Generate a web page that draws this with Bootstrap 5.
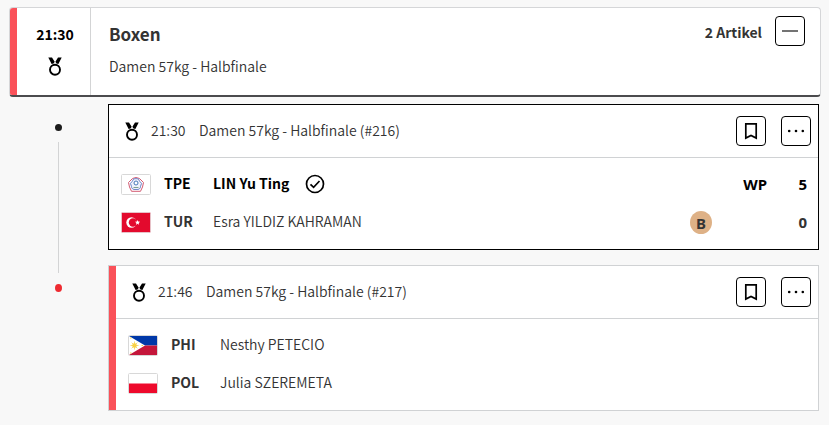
<!DOCTYPE html>
<html lang="de">
<head>
<meta charset="utf-8">
<meta name="viewport" content="width=device-width, initial-scale=1">
<title>Boxen</title>
<link href="https://cdn.jsdelivr.net/npm/bootstrap@5.3.0/dist/css/bootstrap.min.css" rel="stylesheet">
<style>
body{background:#f8f8f8;color:#333;font:350 14px/20px "Noto Sans CJK SC","Noto Sans",sans-serif;padding:7px 8px 15px 9px}
.accent{width:7px;background:#fa5159;flex:none}
.session{background:#fff;border:1px solid #d5d6d8;border-bottom:2px solid #4b4b4d;border-radius:4px;overflow:hidden;height:90px}
.session-time{width:74px;border-right:1px solid #d3d4d5;color:#000;padding:16px 0 0 3px;gap:13px}
.session-title{font-size:17px;line-height:24px;font-weight:700;margin:0 0 10px}
.session-text{padding:14px 0 0 18px}
.session-tools{padding:8px 15px 0 0;gap:13px}
.session-count{padding-top:6px}
.square{width:30px;height:30px;padding:0;border:1px solid #000;border-radius:4px;background:#fff;color:#000;display:flex;align-items:center;justify-content:center}
.timeline{width:99px;padding-top:19px}
.dot{width:7px;height:7px;border-radius:50%;background:#1c1c1c}
.dot-live{height:8px;background:#ee2b31}
.stem{width:1px;height:131px;background:#d3d4d5;margin:11px 0}
.bouts{gap:15px;padding:7px 2px 0 0}
.bout{background:#fff;border:1px solid #d0d2d4}
.bout-done{border-color:#000}
.bout-head{height:53px;border-bottom:1px solid #d0d2d4;padding:0 7px 0 16px;gap:15px}
.bout-time{width:33px;margin-left:-3px}
.bout-head time,.bout-head span,.side span{padding-bottom:3px}
.bout-body{padding:7px 11px 8px 12px}
.side{height:38px}
.side .side-code{width:49px;margin-left:13px;font-weight:700;padding-bottom:2px}
.winner{color:#000;font-weight:700}
.side .score{font-family:"Noto Sans",sans-serif;font-weight:700;font-size:15px;width:40px;padding:0}
.side .bronze{width:22px;height:23px;border-radius:50%;background:#deb186;font:700 15px/24px "Noto Sans",sans-serif;margin-right:55px;padding:0}
svg{display:block;flex:none}
</style>
<script src="https://cdn.jsdelivr.net/npm/bootstrap@5.3.0/dist/js/bootstrap.bundle.min.js"></script>
</head>
<body>
<svg width="0" height="0" class="position-absolute" aria-hidden="true">
  <symbol id="medal" viewBox="0 0 14 19"><circle cx="7" cy="12.7" r="5" fill="none" stroke="#000" stroke-width="1.9"/><path d="M.3.6H4L6.7 4.800 5.600 6.500 3.600 6.900ZM13.700.6H10L7.400 4.800 8.400 6.500 10.400 6.900Z" fill="#000"/></symbol>
  <symbol id="save" viewBox="0 0 14 18"><path d="M1.800 1.800H12.200V16L7 13.400 1.800 16Z" fill="none" stroke="#000" stroke-width="1.700"/></symbol>
  <symbol id="dots" viewBox="0 0 18 4"><g fill="#000"><circle cx="2.200" cy="2" r="1.300"/><circle cx="9" cy="2" r="1.300"/><circle cx="15.800" cy="2" r="1.300"/></g></symbol>
</svg>
<main>
  <header class="session d-flex">
    <div class="accent"></div>
    <div class="session-time d-flex flex-column align-items-center">
      <time class="fw-bold">21:30</time>
      <svg width="14" height="19"><use href="#medal"/></svg>
    </div>
    <div class="session-text flex-grow-1">
      <h1 class="session-title">Boxen</h1>
      <div>Damen 57kg - Halbfinale</div>
    </div>
    <div class="session-tools d-flex align-items-start">
      <span class="session-count fw-bold">2 Artikel</span>
      <button class="square" type="button" aria-label="Einklappen"><svg width="16" height="2"><path d="M0 1H16" stroke="#444" stroke-width="1.400"/></svg></button>
    </div>
  </header>
  <div class="d-flex">
    <div class="timeline d-flex flex-column align-items-center flex-shrink-0">
      <span class="mt-2 dot"></span><span class="stem"></span><span class="dot dot-live"></span>
    </div>
    <div class="bouts d-flex flex-column flex-grow-1">
      <article class="bout bout-done">
        <div class="bout-head d-flex align-items-center">
          <svg width="14" height="19"><use href="#medal"/></svg>
          <time class="bout-time">21:30</time>
          <span class="flex-grow-1">Damen 57kg - Halbfinale (#216)</span>
          <button class="square" type="button" aria-label="Merken"><svg width="14" height="18"><use href="#save"/></svg></button>
          <button class="square" type="button" aria-label="Mehr"><svg width="18" height="4"><use href="#dots"/></svg></button>
        </div>
        <div class="bout-body">
          <div class="side winner d-flex align-items-center">
            <svg width="30" height="21"><rect x=".5" y=".5" width="29" height="20" rx="1" fill="#fff" stroke="#d8d8d8"/><path d="M15 3.500 18.500 4.500 22.500 8.500 21.500 13 19.500 17.300H10.500L8.500 13 7.500 8.500 11.500 4.500Z" fill="#fff" stroke="#d35a72"/><path d="M15 4.600Q18 4 18.600 7.200 22 9 19.600 12.200 19.500 16 15 15.500 10.500 16 10.400 12.200 8 9 11.400 7.200 12 4 15 4.600Z" fill="#eef1fb" stroke="#6f86c8"/><circle cx="15" cy="9" r="2" fill="#fff" stroke="#4677b8"/><path d="M12.500 13.500H17.500" stroke="#80a090"/></svg>
            <span class="side-code">TPE</span><span>LIN Yu Ting</span>
            <svg class="ms-3" width="20" height="20"><circle cx="10" cy="10" r="8.500" fill="none" stroke="#000" stroke-width="1.700"/><path d="M5.500 10.300 8.600 13.300 14.500 7" fill="none" stroke="#000" stroke-width="1.700"/></svg>
            <span class="score ms-auto text-end w-auto">WP</span><span class="score text-end">5</span>
          </div>
          <div class="side d-flex align-items-center">
            <svg width="30" height="21"><rect x=".5" y=".5" width="29" height="20" rx="1" fill="#e30a2d" stroke="#e7c2c8"/><circle cx="10.500" cy="10.500" r="5.200" fill="#fff"/><circle cx="12" cy="10.500" r="4.200" fill="#e30a2d"/><path d="M16.500 7.900 17.200 9.600 19.100 9.700 17.700 10.900 18.100 12.700 16.500 11.700 15 12.700 15.400 10.900 14 9.700 15.900 9.600Z" fill="#fff"/></svg>
            <span class="side-code">TUR</span><span class="flex-grow-1">Esra YILDIZ KAHRAMAN</span>
            <span class="bronze text-center">B</span><span class="score text-end">0</span>
          </div>
        </div>
      </article>
      <article class="bout d-flex">
        <div class="accent"></div>
        <div class="flex-grow-1">
          <div class="bout-head d-flex align-items-center">
            <svg width="14" height="19"><use href="#medal"/></svg>
            <time class="bout-time">21:46</time>
            <span class="flex-grow-1">Damen 57kg - Halbfinale (#217)</span>
            <button class="square" type="button" aria-label="Merken"><svg width="14" height="18"><use href="#save"/></svg></button>
            <button class="square" type="button" aria-label="Mehr"><svg width="18" height="4"><use href="#dots"/></svg></button>
          </div>
          <div class="bout-body">
            <div class="side d-flex align-items-center">
              <svg width="30" height="21"><rect x=".5" y=".5" width="29" height="20" rx="1" fill="#fff" stroke="#d8d8d8"/><path d="M1 1H29V10.500H1Z" fill="#0038a8"/><path d="M1 10.500H29V20H1Z" fill="#c4163a"/><path d="M1 1 17 10.500 1 20Z" fill="#fff"/><circle cx="6.500" cy="10.500" r="2.200" fill="#f8ca22"/><path d="M6.500 6.500V14.500M2.500 10.500H10.500M3.700 7.700 9.300 13.300M9.300 7.700 3.700 13.300" stroke="#f8d24c" stroke-width=".8"/><path d="M2 3H3.500M2 18H3.500M13.500 10.500H15" stroke="#f8d24c"/></svg>
              <span class="side-code">PHI</span><span>Nesthy PETECIO</span>
            </div>
            <div class="side d-flex align-items-center">
              <svg width="30" height="21"><rect x=".5" y=".5" width="29" height="20" rx="1" fill="#fff" stroke="#d8d8d8"/><path d="M1 10.500H29V20H1Z" fill="#ee0a2c"/></svg>
              <span class="side-code">POL</span><span>Julia SZEREMETA</span>
            </div>
          </div>
        </div>
      </article>
    </div>
  </div>
</main>
</body>
</html>
